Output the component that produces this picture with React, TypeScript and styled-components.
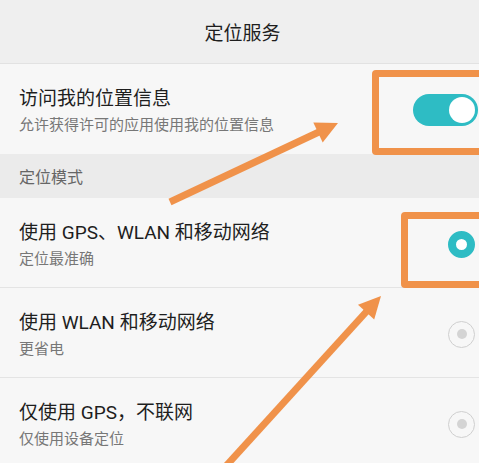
import React from "react";
import styled, { createGlobalStyle } from "styled-components";

const Global = createGlobalStyle`
  html, body { margin: 0; padding: 0; background: #f7f7f7; }
  body { font-family: Roboto, "Noto Sans CJK SC", sans-serif; overflow: hidden; }
`;

const Page = styled.div`
  position: relative;
  width: 479px;
  height: 463px;
  overflow: hidden;
  background: #f7f7f7;
`;

const Header = styled.div`
  height: 63px;
  display: flex;
  align-items: center;
  justify-content: center;
  padding-left: 6px;
  background: #efefef;
  border-bottom: 1px solid #e2e2e2;
  font-size: 19px;
  color: #1e1e1e;
`;

const Row = styled.div<{ $divider?: boolean }>`
  height: 90px;
  display: flex;
  align-items: flex-start;
  justify-content: space-between;
  box-sizing: border-box;
  padding: 22px 4px 0 19px;
  background: #f7f7f7;
  border-bottom: ${(p) => (p.$divider ? "1px solid #e4e4e4" : "none")};
`;

const Texts = styled.div`
  display: flex;
  flex-direction: column;
`;

const Title = styled.div`
  font-size: 19px;
  line-height: 26px;
  color: #1e1e1e;
`;

const Sub = styled.div`
  font-size: 15px;
  line-height: 26px;
  color: #777;
`;

const Section = styled.div`
  height: 44px;
  display: flex;
  align-items: center;
  padding-left: 19px;
  background: #ebebeb;
  font-size: 16px;
  color: #666;
`;

const Control = styled.div`
  height: 48px;
  display: flex;
  align-items: center;
`;

const Toggle = styled.div`
  width: 65px;
  height: 32px;
  border-radius: 16px;
  background: #2ebcc4;
  display: flex;
  align-items: center;
  justify-content: flex-end;
  padding-right: 3px;
  box-sizing: border-box;
  margin-right: -3px;
`;

const Knob = styled.div`
  width: 26px;
  height: 26px;
  border-radius: 50%;
  background: #fff;
`;

const Radio = styled.div<{ $on?: boolean }>`
  width: 27px;
  height: 27px;
  border-radius: 50%;
  box-sizing: border-box;
  display: flex;
  align-items: center;
  justify-content: center;
  border: ${(p) => (p.$on ? "8px solid #2ebcc4" : "1.5px solid #cfcfcf")};
  background: ${(p) => (p.$on ? "#fff" : "transparent")};
  &::after {
    content: "";
    display: ${(p) => (p.$on ? "none" : "block")};
    width: 10px;
    height: 10px;
    border-radius: 50%;
    background: #d4d4d4;
  }
`;

const Highlight = styled.div<{ $l: number; $t: number; $h: number }>`
  position: absolute;
  left: ${(p) => p.$l}px;
  top: ${(p) => p.$t}px;
  width: 140px;
  height: ${(p) => p.$h}px;
  box-sizing: border-box;
  border: 7.5px solid #f0924a;
  border-radius: 4px;
  pointer-events: none;
`;

const Overlay = styled.svg`
  position: absolute;
  left: 0;
  top: 0;
  pointer-events: none;
`;

export default function App() {
  return (
    <Page>
      <Global />
      <Header>定位服务</Header>
      <Row>
        <Texts>
          <Title>访问我的位置信息</Title>
          <Sub>允许获得许可的应用使用我的位置信息</Sub>
        </Texts>
        <Control>
          <Toggle>
            <Knob />
          </Toggle>
        </Control>
      </Row>
      <Section>定位模式</Section>
      <Row $divider>
        <Texts>
          <Title>使用 GPS、WLAN 和移动网络</Title>
          <Sub>定位最准确</Sub>
        </Texts>
        <Control>
          <Radio $on />
        </Control>
      </Row>
      <Row $divider>
        <Texts>
          <Title>使用 WLAN 和移动网络</Title>
          <Sub>更省电</Sub>
        </Texts>
        <Control>
          <Radio />
        </Control>
      </Row>
      <Row>
        <Texts>
          <Title>仅使用 GPS，不联网</Title>
          <Sub>仅使用设备定位</Sub>
        </Texts>
        <Control>
          <Radio />
        </Control>
      </Row>

      <Highlight $l={372} $t={70} $h={85} />
      <Highlight $l={401} $t={212} $h={76} />

      <Overlay width="479" height="463" viewBox="0 0 479 463">
        <line x1="170" y1="202" x2="320" y2="131.5" stroke="#f0924a" strokeWidth="7" />
        <polygon points="338,123 313.3,122.4 322.7,142.4" fill="#f0924a" />
        <line x1="226" y1="466" x2="367" y2="311" stroke="#f0924a" strokeWidth="7" />
        <polygon points="381,296 358,304.8 374.2,319.6" fill="#f0924a" />
      </Overlay>
    </Page>
  );
}
